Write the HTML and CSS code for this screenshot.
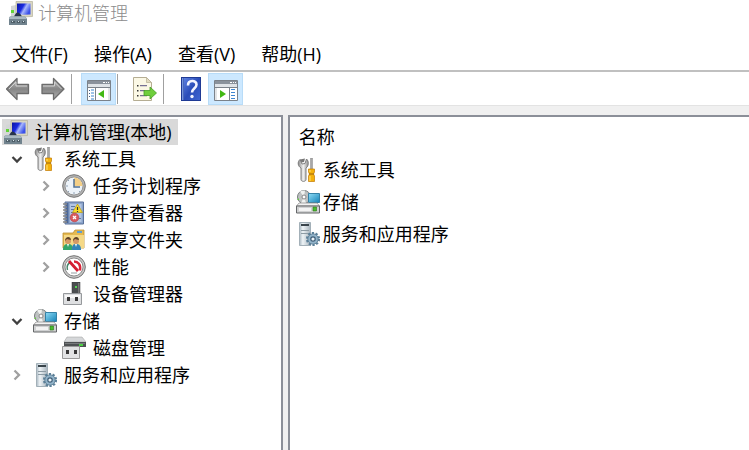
FILE: index.html
```html
<!DOCTYPE html>
<html lang="zh-CN">
<head>
    <meta charset="UTF-8">
    <meta name="viewport" content="width=device-width, initial-scale=1.0">
    <link rel="stylesheet" href="styles.css">
    <title>计算机管理</title>
</head>
<body>
    <!-- icons used by the toolbar, the tree and the list -->
    <svg class="sprite" width="0" height="0" aria-hidden="true">
        <defs>
            <linearGradient id="g-screen" x1="0" y1="0" x2="1" y2=".5">
                <stop offset="0" stop-color="#0a14a0"/><stop offset=".45" stop-color="#1a2ae0"/><stop offset=".65" stop-color="#a9b8fb"/><stop offset="1" stop-color="#3a50ea"/>
            </linearGradient>
            <linearGradient id="g-grey" x1="0" y1="0" x2="0" y2="1">
                <stop offset="0" stop-color="#c4c4c4"/><stop offset=".5" stop-color="#858585"/><stop offset="1" stop-color="#b0b0b0"/>
            </linearGradient>
            <linearGradient id="g-metal" x1="0" y1="0" x2="1" y2="0">
                <stop offset="0" stop-color="#8a8a8a"/><stop offset=".5" stop-color="#f2f2f2"/><stop offset="1" stop-color="#8e8e8e"/>
            </linearGradient>
            <linearGradient id="g-tower" x1="0" y1="0" x2="1" y2="0">
                <stop offset="0" stop-color="#a9b8c2"/><stop offset=".3" stop-color="#eef3f6"/><stop offset="1" stop-color="#a7b4bd"/>
            </linearGradient>
            <linearGradient id="g-help" x1="0" y1="0" x2="1" y2="1">
                <stop offset="0" stop-color="#5b7fe0"/><stop offset=".5" stop-color="#2a4cb8"/><stop offset="1" stop-color="#3f66d2"/>
            </linearGradient>
            <linearGradient id="g-blue" x1="0" y1="0" x2="1" y2="1">
                <stop offset="0" stop-color="#8fdcf6"/><stop offset="1" stop-color="#1583b8"/>
            </linearGradient>
        </defs>
        <symbol id="i-computer" viewBox="0 0 24 24">
            <path d="M2 5l5-1v12H2z" fill="#d3d6d6"/>
            <path d="M2 9h3v3H2z" fill="#62d437"/>
            <path d="M7 .5h16.500v15L7 16z" fill="#dad7c2" stroke="#b4b19c" stroke-width=".7"/>
            <path d="M8 2.500h13.500v11L8 14z" fill="url(#g-screen)"/>
            <path d="M5 15.500c2-4 3-4 4-4s2 1 4 4z" fill="#26334b"/>
            <path d="M1 15.500h15l2 2V24H0v-7z" fill="#71838e"/>
            <path d="M1 15.500h15l2 2.500H0z" fill="#a9b9c2"/>
            <path d="M2 20h4v2H2zM8 20h3v2H8zM13 20h3v2h-3z" fill="#4f5f69"/>
            <path d="M3 20h1v1H3zM9 20h1v1H9zM14 20h1v1h-1z" fill="#dbe6eb"/>
        </symbol>
        <symbol id="i-back" viewBox="1 0 24 24">
            <path d="M1.500 12L12 1.500v6h11.500v9H12v6z" fill="url(#g-grey)" stroke="#6c6c6c" stroke-width="1.300" stroke-linejoin="round"/>
            <path d="M4 12l7-7v4h11" fill="none" stroke="#d0d0d0" stroke-width="1"/>
        </symbol>
        <symbol id="i-forward" viewBox="2 0 24 24">
            <path d="M25 12L14.500 1.500v6H3v9h11.500v6z" fill="url(#g-grey)" stroke="#6c6c6c" stroke-width="1.300" stroke-linejoin="round"/>
            <path d="M4 9h11.500V5l7 7" fill="none" stroke="#d0d0d0" stroke-width="1"/>
        </symbol>
        <symbol id="i-tree-pane" viewBox="0 0 24 24">
            <path d="M.5 3.500h23v20H.5z" fill="#fff" stroke="#7b828a"/>
            <path d="M1 4h22v3H1z" fill="#8a929c"/>
            <path d="M16 5h2v1h-2zM19 5h1v1h-1zM21 5h1v1h-1z" fill="#fff"/>
            <path d="M1 7h22v3H1z" fill="#dfe3e7"/>
            <path d="M1 10.500h22M8.500 10.500v13" stroke="#7b828a"/>
            <path d="M2 13h1v1H2zM2 16h1v1H2zM2 19h1v1H2z" fill="#405d88"/>
            <path d="M4 12.500h3v1H4zM4 15.500h3v1H4zM4 18.500h3v1H4zM4 21.500h3v1H4z" fill="#3e87d2"/>
            <path d="M17 13v8l-6-4z" fill="#41b813"/>
            <path d="M22 11v12" stroke="#c4c9ce"/>
        </symbol>
        <symbol id="i-action-pane" viewBox="0 0 24 24">
            <path d="M.5 3.500h23v20H.5z" fill="#fff" stroke="#7b828a"/>
            <path d="M1 4h22v3H1z" fill="#8a929c"/>
            <path d="M16 5h2v1h-2zM19 5h1v1h-1zM21 5h1v1h-1z" fill="#fff"/>
            <path d="M1 7h22v3H1z" fill="#dfe3e7"/>
            <path d="M1 10.500h22M15.500 10.500v13" stroke="#7b828a"/>
            <path d="M2 11v12" stroke="#c4c9ce"/>
            <path d="M6 13v8l6-4z" fill="#41b813"/>
            <path d="M17 12h4v1h-4zM17 15h4v1h-4zM17 18h4v1h-4zM17 21h4v1h-4z" fill="#3e87d2"/>
        </symbol>
        <symbol id="i-export" viewBox="0 0 24 24">
            <path d="M.5.5h13l5 5v18H.5z" fill="#fbf8e5" stroke="#b5ad93"/>
            <path d="M13.500.5v5h5z" fill="#e3dcc0" stroke="#b5ad93" stroke-width=".7"/>
            <path d="M4 8h1.500v1.500H4zM4 13h1.500v1.500H4zM4 18h1.500v1.500H4z" fill="#333"/>
            <path d="M7 8h7v1.300H7zM7 13h5v1.300H7zM7 18h7v1.300H7z" fill="#777194"/>
            <path d="M11 13.500h6V10l6.500 6-6.500 6v-3.500h-6z" fill="#6fce3c" stroke="#449d26" stroke-width=".8"/>
        </symbol>
        <symbol id="i-help" viewBox="0 0 24 24">
            <path d="M2 0h20v24H2z" fill="#1f3a94"/>
            <path d="M5 1h16v22H5z" fill="url(#g-help)"/>
            <path d="M3 1h1.500v22H3z" fill="#7695df"/>
            <path d="M9 8.500C9 2.500 17.500 3 17.500 7.500c0 4-4.500 4-4.500 8" fill="none" stroke="#f3f5ff" stroke-width="2.600"/>
            <circle cx="13" cy="19.500" r="1.700" fill="#f3f5ff"/>
        </symbol>
        <symbol id="i-tools" viewBox="0 0 24 24">
            <path d="M4 1.500C1 4 2 8.500 5 10v11.500C5 24 10 24 10 21.500V10c3-2 3-7 .5-9L9 5.500 6 6z" fill="url(#g-metal)" stroke="#757575" stroke-width=".9"/>
            <path d="M4 1.500l5-1L8 4 5.500 4.500z" fill="#777"/>
            <path d="M14.500 0h2v12h-2z" fill="#a7a7a7" stroke="#777" stroke-width=".4"/>
            <path d="M12.500 11h6v3l-1 2 1 2v5.500h-6V18l1-2-1-2z" fill="#f5b20b" stroke="#c27a05" stroke-width=".7"/>
            <path d="M14 12v2M14 18v5" stroke="#ffe174"/>
            <path d="M13 16h5" stroke="#9b640b"/>
        </symbol>
        <symbol id="i-clock" viewBox="0 0 24 24">
            <circle cx="12" cy="12" r="11.300" fill="#b3b3b3" stroke="#777"/>
            <circle cx="12" cy="12" r="9" fill="#edf3f9" stroke="#878787" stroke-width=".8"/>
            <path d="M12 12V3.500a8.500 8.500 0 0 1 8.500 8.500z" fill="#f4cf86"/>
            <path d="M12 5v8h6" fill="none" stroke="#527294" stroke-width="1.500"/>
            <path d="M12 18v2M4 12h2M6 6l1 1M6 18l1-1M18 18l-1-1" stroke="#91a4b7"/>
        </symbol>
        <symbol id="i-events" viewBox="0 0 24 24">
            <path d="M3 1h18.500v22H3z" fill="#8ca5cc" stroke="#5a7199"/>
            <path d="M4 2h2.500v20H4z" fill="#4d6898"/>
            <path d="M8 3h11.500v18H8z" fill="#b4c6e2"/>
            <path d="M9 5.500h4M9 8.500h3M9 11.500h3M9 14.500h1M17 17.500h2" stroke="#5d779f"/>
            <path d="M1 3h4M1 6h4M1 9h4M1 12h4M1 15h4M1 18h4M1 21h4" stroke="#888" stroke-width="1.300"/>
            <path d="M15.500 3l5 8.500h-10z" fill="#f8db27" stroke="#b99710" stroke-width=".7"/>
            <path d="M15.500 6v3M15.500 10v1" stroke="#333" stroke-width="1.200"/>
            <circle cx="12.500" cy="16.500" r="4.300" fill="#d85a5e" stroke="#b9363d" stroke-width=".6"/>
            <path d="M11 15l3 3M14 15l-3 3" stroke="#fff" stroke-width="1.300"/>
        </symbol>
        <symbol id="i-shared" viewBox="0 0 24 24">
            <path d="M1 5h10l2-3h9v18H1z" fill="#e5b950" stroke="#bd8f32" stroke-width=".8"/>
            <path d="M15 3h5v2h-5z" fill="#5e9ed2"/>
            <path d="M2 7h20v13H2z" fill="#f5d987"/>
            <path d="M1 22c0-5 2-6 5-6s5 1 5 6z" fill="#35a66b"/>
            <path d="M10 22c0-5 1-6 4-6s5 1 5 6z" fill="#3385b8"/>
            <circle cx="6" cy="13" r="3" fill="#d59966"/>
            <circle cx="14" cy="13" r="3" fill="#d59966"/>
            <path d="M3 13c0-5 6-5 6-1-2 0-3-1-4-1zM11 13c0-5 6-5 6-1-2 0-3-1-4-1z" fill="#5f4226"/>
            <path d="M5 16l1 3 1-3zM13 16l1 3 1-3z" fill="#fff"/>
        </symbol>
        <symbol id="i-perf" viewBox="0 0 24 24">
            <circle cx="12" cy="12" r="11.300" fill="#c7c7c7" stroke="#737373"/>
            <circle cx="12" cy="12" r="9" fill="#fff" stroke="#777" stroke-width=".8"/>
            <path d="M5.500 15a7 7 0 0 1 3-8" fill="none" stroke="#46866b" stroke-width="1.500"/>
            <path d="M12 6.500c4 0 7 3 6 9" fill="none" stroke="#da2639" stroke-width="2.500"/>
            <path d="M7 6l9 10" stroke="#d31d30" stroke-width="2.800"/>
            <path d="M9 18h6" stroke="#adb5b9" stroke-width="1.300"/>
        </symbol>
        <symbol id="i-device" viewBox="0 0 24 24">
            <path d="M10 0h8v13h-8z" fill="#4b4e50" stroke="#303335" stroke-width=".5"/>
            <path d="M16 1h1.500v11H16z" fill="#777"/>
            <path d="M13 4h2v2h-2z" fill="#55d653"/>
            <path d="M1.500 11.500h18v11h-18z" fill="#dedfe1" stroke="#96999c"/>
            <path d="M3 13h15v3H3z" fill="#f8f8f8"/>
            <path d="M5 15h3v4H5zM13 15h3v4h-3z" fill="#383838"/>
        </symbol>
        <symbol id="i-storage" viewBox="0 0 24 24">
            <circle cx="8" cy="7" r="6.500" fill="#bec2c2" stroke="#777c7d"/>
            <path d="M8 7L4 1.500A7 7 0 0 1 9 .5zM8 7l2 6-5 0z" fill="#f0f2f0"/>
            <circle cx="8" cy="7" r="2" fill="#fff" stroke="#888"/>
            <path d="M12.500 3.500h11v9h-11z" fill="url(#g-blue)" stroke="#28789f" stroke-width=".9"/>
            <path d="M3 13h18l2.500 3H.5z" fill="#f2f2f2" stroke="#888" stroke-width=".7"/>
            <path d="M.5 16h23v7H.5z" fill="#d0d1d2" stroke="#656769"/>
            <path d="M3 18h12v3H3z" fill="#f3f3f3"/>
            <path d="M17 17h3.500v4H17z" fill="#47bd2e" stroke="#33751c" stroke-width=".6"/>
            <path d="M1 10l2-2v2z" fill="#64c941"/>
        </symbol>
        <symbol id="i-disk" viewBox="0 0 24 24">
            <path d="M5 1h15l4 5H2z" fill="#d5d7d9" stroke="#999" stroke-width=".5"/>
            <path d="M2 6h22v5H2z" fill="#4e5153"/>
            <path d="M3 7h20v1H3z" fill="#777a7c"/>
            <path d="M17 8h4v2h-4z" fill="#4cd143"/>
            <path d="M.5 10.500h17v12H.5z" fill="#e2e3e4" stroke="#999"/>
            <path d="M4 14h3v4H4zM12 14h3v4h-3z" fill="#383838"/>
        </symbol>
        <symbol id="i-services" viewBox="0 0 24 24">
            <path d="M3.500.5h11v23h-11z" fill="url(#g-tower)" stroke="#a3b0b8"/>
            <path d="M5 8h8v1H5zM5 11h8v1H5z" fill="#8d9ba4"/>
            <path d="M5 2h8v2H5z" fill="#39444b"/>
            <circle cx="17" cy="17" r="6" fill="none" stroke="#5b8099" stroke-width="2.200" stroke-dasharray="2.200 1.570"/>
            <circle cx="17" cy="17" r="5.200" fill="#91b3c9" stroke="#58788f" stroke-width=".8"/>
            <circle cx="17" cy="17" r="2.200" fill="#eef5f9" stroke="#405f78" stroke-width="1.200"/>
        </symbol>
        <symbol id="i-open" viewBox="0 0 12 12">
            <path d="M1.500 4L6 8.500 10.500 4" fill="none" stroke="#404040" stroke-width="2.300"/>
        </symbol>
        <symbol id="i-closed" viewBox="0 0 12 12">
            <path d="M3.500 1.500L8 6 3.500 10.500" fill="none" stroke="#a0a0a0" stroke-width="2.300"/>
        </symbol>
    </svg>

    <header class="titlebar">
        <svg class="icon"><use href="#i-computer"/></svg>
        <h1 class="title">计算机管理</h1>
    </header>

    <nav class="menubar">
        <button class="menu">文件(F)</button>
        <button class="menu">操作(A)</button>
        <button class="menu">查看(V)</button>
        <button class="menu">帮助(H)</button>
    </nav>

    <div class="toolbar">
        <button class="tool" aria-label="后退"><svg class="icon"><use href="#i-back"/></svg></button>
        <button class="tool" aria-label="前进"><svg class="icon"><use href="#i-forward"/></svg></button>
        <span class="separator"></span>
        <button class="tool pressed" aria-label="显示/隐藏控制台树"><svg class="icon"><use href="#i-tree-pane"/></svg></button>
        <span class="separator"></span>
        <button class="tool" aria-label="导出列表"><svg class="icon"><use href="#i-export"/></svg></button>
        <span class="separator"></span>
        <button class="tool" aria-label="帮助"><svg class="icon"><use href="#i-help"/></svg></button>
        <button class="tool pressed" aria-label="显示/隐藏操作窗格"><svg class="icon"><use href="#i-action-pane"/></svg></button>
    </div>

    <main class="panes">
        <nav class="pane">
            <div class="row root">
                <button class="item selected"><svg class="icon"><use href="#i-computer"/></svg>计算机管理(本地)</button>
            </div>
            <ul class="tree">
                <li>
                    <div class="row">
                        <button class="toggle" aria-label="折叠"><svg class="chevron"><use href="#i-open"/></svg></button>
                        <button class="item"><svg class="icon"><use href="#i-tools"/></svg>系统工具</button>
                    </div>
                    <ul class="tree nested">
                        <li class="row">
                            <button class="toggle" aria-label="展开"><svg class="chevron"><use href="#i-closed"/></svg></button>
                            <button class="item"><svg class="icon"><use href="#i-clock"/></svg>任务计划程序</button>
                        </li>
                        <li class="row">
                            <button class="toggle" aria-label="展开"><svg class="chevron"><use href="#i-closed"/></svg></button>
                            <button class="item"><svg class="icon"><use href="#i-events"/></svg>事件查看器</button>
                        </li>
                        <li class="row">
                            <button class="toggle" aria-label="展开"><svg class="chevron"><use href="#i-closed"/></svg></button>
                            <button class="item"><svg class="icon"><use href="#i-shared"/></svg>共享文件夹</button>
                        </li>
                        <li class="row">
                            <button class="toggle" aria-label="展开"><svg class="chevron"><use href="#i-closed"/></svg></button>
                            <button class="item"><svg class="icon"><use href="#i-perf"/></svg>性能</button>
                        </li>
                        <li class="row">
                            <span class="toggle"></span>
                            <button class="item"><svg class="icon"><use href="#i-device"/></svg>设备管理器</button>
                        </li>
                    </ul>
                </li>
                <li>
                    <div class="row">
                        <button class="toggle" aria-label="折叠"><svg class="chevron"><use href="#i-open"/></svg></button>
                        <button class="item"><svg class="icon"><use href="#i-storage"/></svg>存储</button>
                    </div>
                    <ul class="tree nested">
                        <li class="row">
                            <span class="toggle"></span>
                            <button class="item"><svg class="icon"><use href="#i-disk"/></svg>磁盘管理</button>
                        </li>
                    </ul>
                </li>
                <li class="row">
                    <button class="toggle" aria-label="展开"><svg class="chevron"><use href="#i-closed"/></svg></button>
                    <button class="item"><svg class="icon"><use href="#i-services"/></svg>服务和应用程序</button>
                </li>
            </ul>
        </nav>

        <section class="pane">
            <table class="list">
                <thead>
                    <tr><th>名称</th></tr>
                </thead>
                <tbody>
                    <tr><td><div class="entry"><svg class="icon"><use href="#i-tools"/></svg>系统工具</div></td></tr>
                    <tr><td><div class="entry"><svg class="icon"><use href="#i-storage"/></svg>存储</div></td></tr>
                    <tr><td><div class="entry"><svg class="icon"><use href="#i-services"/></svg>服务和应用程序</div></td></tr>
                </tbody>
            </table>
        </section>
    </main>
</body>
</html>
```
FILE: styles.css
```css
*{
    box-sizing: border-box;
    margin: 0;
    padding: 0;
}

body{
    display: flex;
    flex-direction: column;
    height: 100vh;
    overflow: hidden;
    background-color: #fff;
    color: #000;
    font-family: "Open Sans", "Noto Sans CJK SC", sans-serif;
    font-size: 18px;
    line-height: 26px;
}

button{
    border: none;
    background: none;
    color: inherit;
    font: inherit;
    white-space: nowrap;
}

.sprite{
    position: absolute;
}
.icon{
    display: block;
    flex: none;
    width: 24px;
    height: 24px;
}

.titlebar{
    display: flex;
    align-items: center;
    gap: 5px;
    height: 26px;
    padding-left: 9px;
}
.title{
    color: #8c8c8c;
    font-size: 18px;
    font-weight: 300;
}

.menubar{
    display: flex;
    gap: 26px;
    padding: 15px 12px 3px;
    border-bottom: 2px solid #c0c0c0;
}

.toolbar{
    display: flex;
    align-items: center;
    height: 34px;
    border-bottom: 1px solid #e3e3e3;
}
.tool{
    display: flex;
    align-items: center;
    justify-content: center;
    width: 35px;
    height: 32px;
}
.pressed{
    background-color: #cce8ff;
    border: 1px solid #b8dcf8;
}
.separator{
    width: 1px;
    height: 30px;
    margin: 0 9px 0 1px;
    background-color: #a0a0a0;
}

.panes{
    flex: 1;
    display: grid;
    grid-template-columns: 19fr 31fr;
    gap: 5px;
    min-height: 0;
    padding-top: 9px;
    background-color: #f0f0f0;
}
.pane{
    overflow: hidden;
    background-color: #fff;
    border: 2px solid #8b8f98;
    border-bottom: none;
}
.pane:first-child{
    padding-top: 1px;
    border-left: none;
}
.pane:last-child{
    padding: 7px 6px;
    border-right: none;
}

.tree{
    list-style: none;
}
.nested{
    padding-left: 29px;
}
.row{
    display: flex;
    align-items: center;
    height: 27px;
}
.root{
    padding-left: 2px;
}
.toggle{
    display: flex;
    align-items: center;
    justify-content: center;
    width: 33px;
    height: 24px;
}
.chevron{
    width: 12px;
    height: 12px;
}
.item{
    display: flex;
    align-items: center;
    gap: 7px;
}
.selected{
    padding: 0 6px 0 2px;
    background-color: #d9d9d9;
}

.list{
    border-collapse: collapse;
}
.list th{
    padding: 0 3px 4px;
    font-weight: 400;
    text-align: left;
}
.list td{
    height: 32px;
}
.entry{
    display: flex;
    align-items: center;
    gap: 3px;
}
```
